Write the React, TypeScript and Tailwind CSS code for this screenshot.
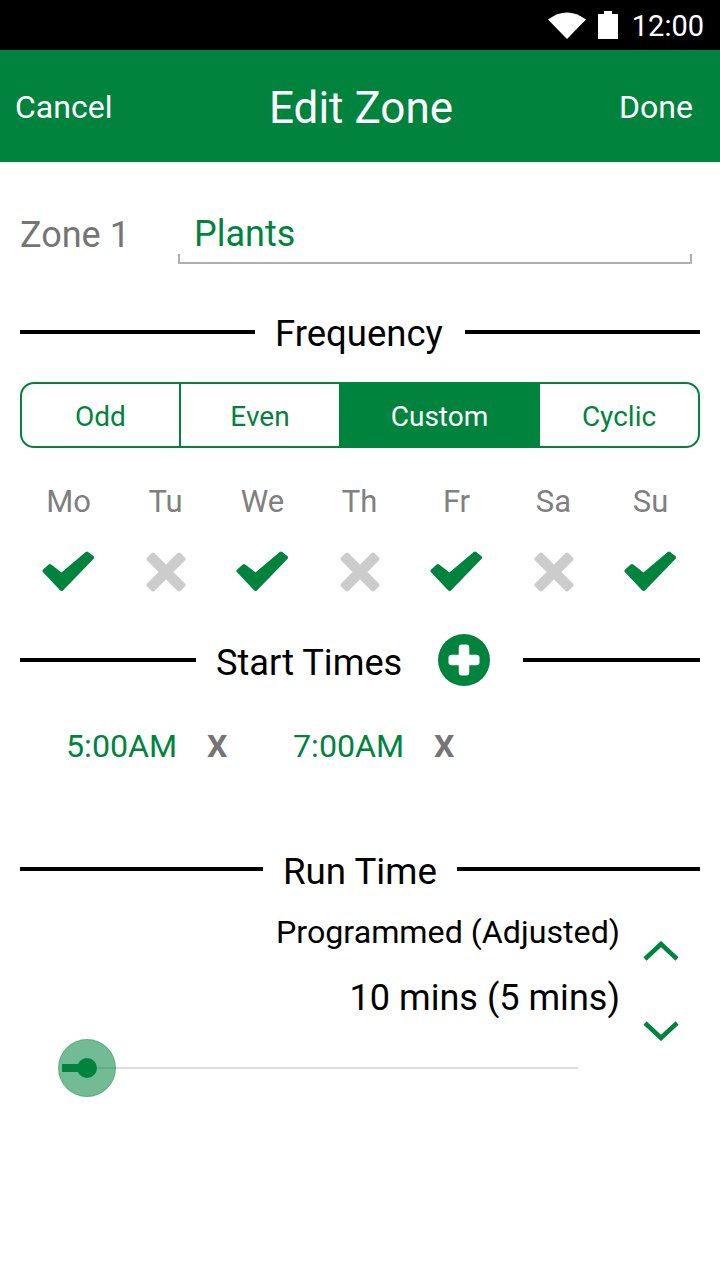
import React from "react";

const GREEN = "#00843d";

const days = [
  { label: "Mo", on: true },
  { label: "Tu", on: false },
  { label: "We", on: true },
  { label: "Th", on: false },
  { label: "Fr", on: true },
  { label: "Sa", on: false },
  { label: "Su", on: true },
];

const Check = () => (
  <svg width="54" height="42" viewBox="0 0 54 42">
    <path
      d="M2.5 20 L19.5 38 L50 6.5 L45 2.5 L19.5 24 L8 15 Z"
      fill={GREEN}
      stroke={GREEN}
      strokeWidth="4"
      strokeLinejoin="round"
    />
  </svg>
);

const Cross = () => (
  <svg width="40" height="40" viewBox="0 0 40 40">
    <path
      d="M7 2.5 L20 15.5 L33 2.5 L37.5 7 L24.5 20 L37.5 33 L33 37.5 L20 24.5 L7 37.5 L2.5 33 L15.5 20 L2.5 7 Z"
      fill="#cccccc"
      stroke="#cccccc"
      strokeWidth="4"
      strokeLinejoin="round"
    />
  </svg>
);

const Rule = ({ className }: { className: string }) => <div className={`h-[4px] bg-black ${className}`} />;

const App: React.FC = () => {
  return (
    <div className="w-[720px] h-[1280px] bg-white overflow-hidden font-['Roboto',sans-serif]">
      {/* Status bar */}
      <div className="h-[50px] bg-black flex items-center justify-end text-white">
        <svg width="38" height="28" viewBox="0 0 38 28" className="mr-[12px]">
          <path d="M0 8.5 Q19 -5.5 38 8.5 L19 28 Z" fill="#fff" />
        </svg>
        <svg width="20" height="28" viewBox="0 0 20 28" className="mr-[14px]">
          <path d="M6 0 H14 V3 H20 V28 H0 V3 H6 Z" fill="#fff" />
        </svg>
        <span className="text-[29px] leading-none mr-[16px] mt-[3px]">12:00</span>
      </div>

      {/* Header */}
      <div className="h-[112px] bg-[#00843d] flex items-center px-[15px] text-white">
        <span className="flex-1 text-[32px] pt-[2px]">Cancel</span>
        <span className="text-[44px] ml-[2px] pt-[4px]">Edit Zone</span>
        <div className="flex-1 text-[32px] text-right pt-[2px]">
          <span className="mr-[12px]">Done</span>
        </div>
      </div>

      {/* Name */}
      <div className="flex items-start mt-[50px] pl-[20px] h-[60px]">
        <span className="text-[36px] leading-[46px] text-[#757575] w-[158px]">Zone 1</span>
        <div className="w-[514px] h-[52px] pl-[16px] border-b-2 border-[#b0b0b0] relative">
          <span className="text-[36px] leading-[44px] text-[#00843d]">Plants</span>
          <div className="absolute left-0 bottom-0 w-[2px] h-[8px] bg-[#b0b0b0]" />
          <div className="absolute right-0 bottom-0 w-[2px] h-[8px] bg-[#b0b0b0]" />
        </div>
      </div>

      {/* Frequency */}
      <div className="flex items-center mx-[20px] mt-[37px] h-[46px]">
        <Rule className="w-[235px]" />
        <span className="text-[36.5px] leading-none text-black ml-[20px] mr-[23px] pt-[5px] w-[167px] whitespace-nowrap">Frequency</span>
        <Rule className="flex-1" />
      </div>

      <div className="mx-[20px] mt-[27px] h-[66px] flex border-2 border-[#00843d] rounded-[14px] overflow-hidden text-[28px] text-[#00843d]">
        <div className="w-[159px] pt-[4px] flex items-center justify-center border-r-2 border-[#00843d]">Odd</div>
        <div className="w-[158px] pt-[4px] flex items-center justify-center">Even</div>
        <div className="w-[201px] pt-[4px] flex items-center justify-center bg-[#00843d] text-white">Custom</div>
        <div className="flex-1 pt-[4px] flex items-center justify-center">Cyclic</div>
      </div>

      {/* Days */}
      <div className="mt-[30px] ml-[20px] grid grid-cols-[repeat(7,97px)]">
        {days.map((d) => (
          <div key={d.label} className="flex flex-col items-center">
            <span className="text-[31px] leading-[46px] text-[#808080] pt-[1px]">{d.label}</span>
            <div className="mt-[26px] h-[42px] flex items-center justify-center">{d.on ? <Check /> : <Cross />}</div>
          </div>
        ))}
      </div>

      {/* Start times */}
      <div className="flex items-center mx-[20px] mt-[41px] h-[52px]">
        <Rule className="w-[176px]" />
        <span className="text-[36.2px] leading-none text-black ml-[20px] mr-[1px] pt-[6px] w-[221px] whitespace-nowrap">Start Times</span>
        <svg width="52" height="52" viewBox="0 0 52 52">
          <circle cx="26" cy="26" r="26" fill={GREEN} />
          <rect x="10.5" y="20.75" width="31" height="10.5" rx="3" fill="#fff" />
          <rect x="20.75" y="10.5" width="10.5" height="31" rx="3" fill="#fff" />
        </svg>
        <Rule className="flex-1 ml-[33px]" />
      </div>

      <div className="flex items-center mt-[37px] pl-[66px] h-[46px] text-[32.2px]">
        <span className="text-[#00843d] w-[141px]">5:00AM</span>
        <span className="text-[#757575] font-bold w-[86px]">X</span>
        <span className="text-[#00843d] w-[141px]">7:00AM</span>
        <span className="text-[#757575] font-bold">X</span>
      </div>

      {/* Run time */}
      <div className="flex items-center mx-[20px] mt-[77px] h-[46px]">
        <Rule className="w-[243px]" />
        <span className="text-[36.7px] leading-none text-black ml-[20px] mr-[21px] pt-[6px] w-[153px] whitespace-nowrap">Run Time</span>
        <Rule className="flex-1" />
      </div>

      <div className="flex justify-end mt-[14px] pr-[41px]">
        <div className="flex flex-col items-end pt-[3px]">
          <span className="text-[32.2px] leading-[46px] text-black">Programmed (Adjusted)</span>
          <span className="text-[36.1px] leading-[46px] text-black mt-[20px]">10 mins (5 mins)</span>
        </div>
        <div className="flex flex-col items-center ml-[23px] pt-[35px]">
          <svg width="36" height="22" viewBox="0 0 36 22" fill="none">
            <path d="M2 18 L18 3 L34 18" stroke={GREEN} strokeWidth="4.5" />
          </svg>
          <svg width="36" height="22" viewBox="0 0 36 22" fill="none" className="mt-[56px]">
            <path d="M2 4 L18 19 L34 4" stroke={GREEN} strokeWidth="4.5" />
          </svg>
        </div>
      </div>

      {/* Slider */}
      <div className="relative ml-[87px] mt-[26px] w-[491px] h-[2px] bg-[#dddddd]">
        <div className="absolute left-[-29px] top-[-28px] w-[58px] h-[58px] rounded-full bg-[#00843d]/55 border border-[#00843d]/20" />
        <div className="absolute left-[-10px] top-[-9px] w-[20px] h-[20px] rounded-full bg-[#00843d]" />
        <div className="absolute left-[-25px] top-[-3px] w-[20px] h-[8px] bg-[#00843d]" />
      </div>
    </div>
  );
};

export default App;
